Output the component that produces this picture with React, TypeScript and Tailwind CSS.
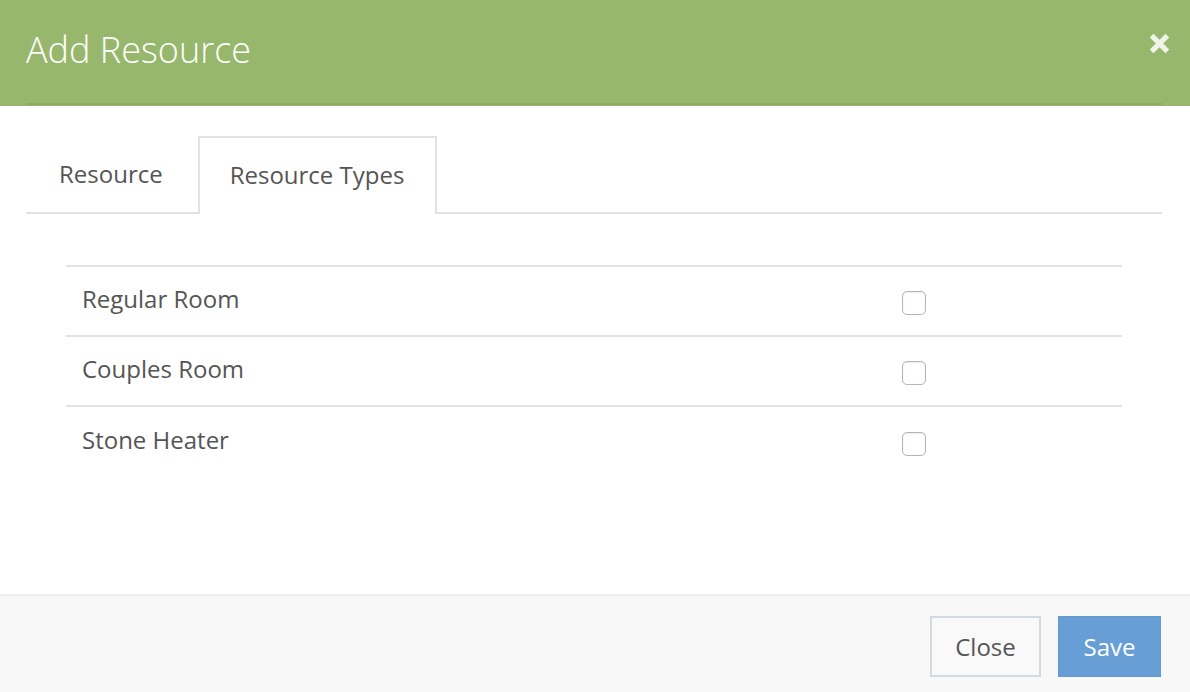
import React, { useState } from "react";

const rows = ["Regular Room", "Couples Room", "Stone Heater"];

export default function App() {
    const [tab, setTab] = useState("types");
    const [checked, setChecked] = useState<Record<string, boolean>>({});

    return (
        <div className="w-[1190px] h-[692px] bg-white flex flex-col text-[#555] font-['Open_Sans',sans-serif] overflow-hidden">
            {/* header */}
            <div className="bg-[#97b86c] pl-[26px] pr-[28px] h-[106px] shrink-0">
                <div className="h-[105px] border-b-2 border-[#8aab60] flex items-center justify-between">
                    <h1 className="text-[36px] font-light text-white -mt-[4px]">Add Resource</h1>
                    <button className="text-[#eef4e8] -mr-[8px] -mt-[16px]">
                        <svg width="21" height="21" viewBox="0 0 20 20">
                            <path d="M2.5 2.5 L17.5 17.5 M17.5 2.5 L2.5 17.5" stroke="currentColor" strokeWidth="5" strokeLinecap="butt" />
                        </svg>
                    </button>
                </div>
            </div>

            {/* tabs */}
            <div className="ml-[26px] mr-[28px] mt-[30px] flex border-b-2 border-[#e2e2e2] h-[78px]">
                <button
                    onClick={() => setTab("resource")}
                    className={`pl-[31px] pr-[33px] text-[24px] h-[78px] -mb-[2px] pb-[2px] ${tab === "resource" ? "bg-white border-2 border-b-0 border-[#e2e2e2]" : "border-2 border-transparent"}`}
                >
                    Resource
                </button>
                <button
                    onClick={() => setTab("types")}
                    className={`pl-[30px] pr-[31px] text-[24px] h-[78px] -mb-[2px] pb-[2px] ${tab === "types" ? "bg-white border-2 border-b-0 border-[#e2e2e2]" : "border-2 border-transparent"}`}
                >
                    Resource Types
                </button>
            </div>

            {/* list */}
            <div className="mx-[66px] mt-[51px] w-[1056px] border-t-2 border-[#e2e2e2]">
                {rows.map((r, i) => (
                    <div
                        key={r}
                        className={`flex items-center h-[70px] ${i < rows.length - 1 ? "border-b-2 border-[#e2e2e2]" : ""}`}
                    >
                        <div className="w-[836px] pl-[16px] text-[24px] -mt-[5px]">{r}</div>
                        <button
                            onClick={() => setChecked({ ...checked, [r]: !checked[r] })}
                            className="w-[24px] h-[24px] rounded-[5px] border border-[#b5b5b5] bg-white shadow-[inset_0_1px_2px_rgba(0,0,0,0.08)] flex items-center justify-center mt-[4px]"
                        >
                            {checked[r] && (
                                <svg width="14" height="14" viewBox="0 0 14 14">
                                    <path d="M2 7 L6 11 L12 3" stroke="#555" strokeWidth="2" fill="none" />
                                </svg>
                            )}
                        </button>
                    </div>
                ))}
            </div>

            {/* footer */}
            <div className="mt-auto h-[98px] bg-[#f8f8f8] border-t-2 border-[#eeeeee] flex items-start justify-end gap-[17px] pt-[20px] pr-[29px]">
                <button className="w-[111px] h-[61px] border-2 border-[#d2dae4] bg-[#f9f9f9] text-[24px] text-[#555]">Close</button>
                <button className="w-[103px] h-[61px] bg-[#679ed6] border border-[#6399d0] text-[24px] text-white">Save</button>
            </div>
        </div>
    );
}
